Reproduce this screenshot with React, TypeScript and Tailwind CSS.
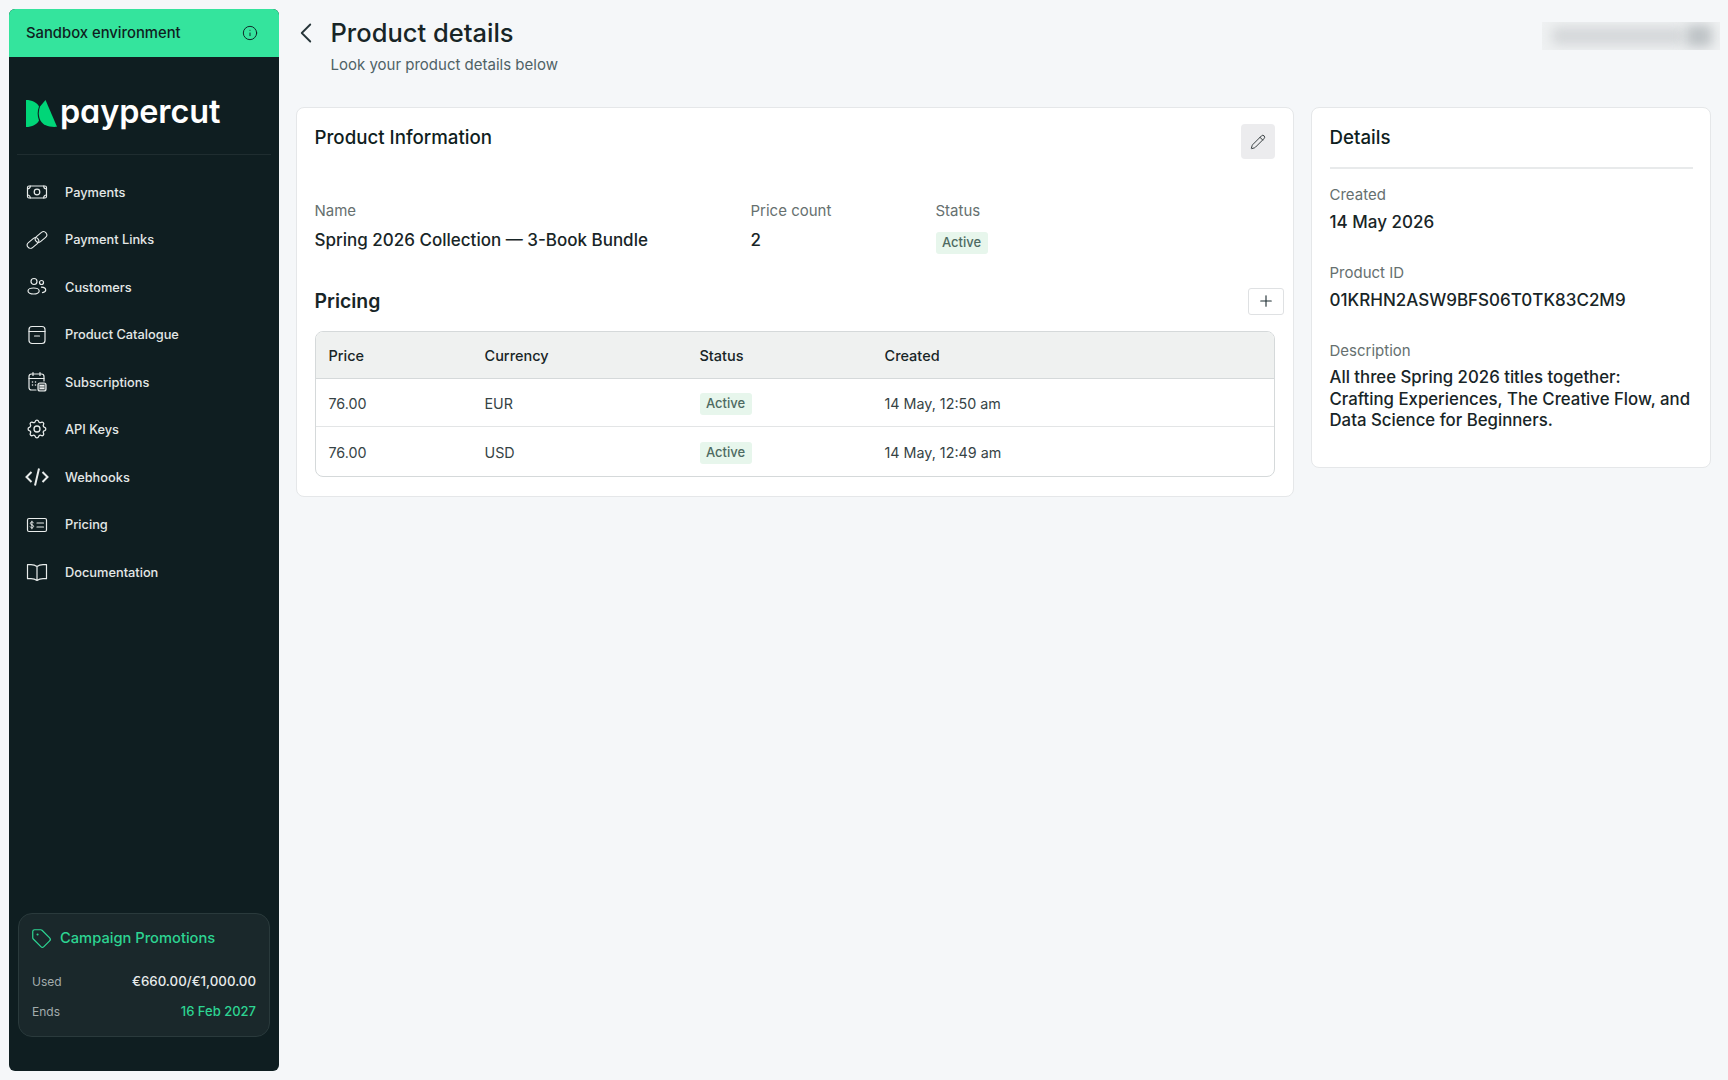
import { ChevronLeft, Info, Pencil, Plus, Tag } from "lucide-react";
import type { ReactNode } from "react";

const FONT = "font-['Inter','Liberation_Sans',sans-serif]";

// sidebar icons, drawn on a 24x24 box
function NavIcon({ name }: { name: string }) {
  const shared = {
    width: 24,
    height: 24,
    viewBox: "0 0 24 24",
    fill: "none",
    stroke: "currentColor",
    strokeWidth: 1.2,
    strokeLinecap: "round" as const,
    strokeLinejoin: "round" as const,
  };
  switch (name) {
    case "payments":
      return (
        <svg {...shared}>
          <rect x="2.5" y="6" width="19" height="12" rx="1.5" />
          <circle cx="12" cy="12" r="2.8" />
          <path d="M2.500 9c1.600 0 2.800-1.300 2.800-3M21.500 9c-1.600 0-2.800-1.300-2.800-3M2.500 15c1.600 0 2.800 1.300 2.800 3M21.500 15c-1.600 0-2.800 1.300-2.800 3" />
        </svg>
      );
    case "links":
      return (
        <svg {...shared} strokeWidth={1.1}>
          <rect x="1.500" y="11.800" width="13" height="6.400" rx="3.200" transform="rotate(-40 8 15)" />
          <rect x="9.500" y="5.800" width="13" height="6.400" rx="3.200" transform="rotate(-40 16 9)" />
        </svg>
      );
    case "customers":
      return (
        <svg {...shared}>
          <circle cx="9" cy="6.500" r="3" />
          <circle cx="16.500" cy="7.500" r="2" />
          <ellipse cx="8.600" cy="16" rx="5.600" ry="3" />
          <path d="M16.500 12.200c2.400.2 4.200 1.300 4.200 2.800 0 1.300-1.300 2.300-3.200 2.700" />
        </svg>
      );
    case "catalogue":
      return (
        <svg {...shared}>
          <rect x="4" y="3.500" width="16" height="17" rx="3" />
          <path d="M4 8.500h16M9.500 13h5" />
        </svg>
      );
    case "subscriptions":
      return (
        <svg {...shared}>
          <path d="M11 20H6.500A2.500 2.500 0 0 1 4 17.500v-11A2.500 2.500 0 0 1 6.500 4h10A2.500 2.500 0 0 1 19 6.500V11" />
          <path d="M4 8.500h15M8 2.500v3M15 2.500v3" />
          <path d="M7.500 12h.01M10.500 12h.01M7.500 15h.01M10.500 15h.01" strokeWidth="1.6" />
          <rect x="13" y="13" width="8" height="8" rx="2" fill="currentColor" fillOpacity=".35" />
          <path d="M15 15.500h4M15 17h4M15 18.500h4" strokeWidth="1" />
        </svg>
      );
    case "keys":
      return (
        <svg {...shared} strokeWidth={1.3}>
          <path d="M10.300 3.300c.4-1.600 2.900-1.600 3.300 0a1.700 1.700 0 0 0 2.600 1.100c1.500-.9 3.200.8 2.300 2.300a1.700 1.700 0 0 0 1.100 2.600c1.600.4 1.600 2.900 0 3.300a1.700 1.700 0 0 0-1.100 2.600c.9 1.500-.8 3.200-2.300 2.300a1.700 1.700 0 0 0-2.600 1.100c-.4 1.600-2.900 1.600-3.300 0a1.700 1.700 0 0 0-2.600-1.100c-1.500.9-3.200-.8-2.300-2.300a1.700 1.700 0 0 0-1.100-2.600c-1.600-.4-1.600-2.900 0-3.300a1.700 1.700 0 0 0 1.100-2.600c-.9-1.500.8-3.200 2.300-2.300a1.700 1.700 0 0 0 2.600-1.100Z" />
          <circle cx="12" cy="11" r="3" />
        </svg>
      );
    case "webhooks":
      return (
        <svg {...shared} strokeWidth={2} strokeLinecap="butt" strokeLinejoin="miter">
          <path d="M6.500 7 1.500 12l5 5M17.500 7l5 5-5 5M14 3.500l-4 17" />
        </svg>
      );
    case "pricing":
      return (
        <svg {...shared}>
          <rect x="2.500" y="5.500" width="19" height="13" rx="1.500" />
          <path d="M12 10h6.500M12 14h6.500" />
          <path d="M8.500 9.800c-.4-.6-1-.8-1.600-.8-.9 0-1.600.5-1.600 1.400 0 1.900 3.300 1 3.300 2.900 0 .9-.8 1.500-1.700 1.500-.7 0-1.300-.3-1.700-.9M6.900 8.200v7.600" strokeWidth="1" />
        </svg>
      );
    default:
      return (
        <svg {...shared}>
          <path d="M12 6.500c-1.600-1.200-3.600-1.800-6-1.800H2.500v14H6c2.400 0 4.400.6 6 1.800 1.600-1.200 3.600-1.800 6-1.800h3.500v-14H18c-2.400 0-4.400.6-6 1.800ZM12 6.500v14" />
        </svg>
      );
  }
}

const NAV = [
  { name: "payments", label: "Payments" },
  { name: "links", label: "Payment Links" },
  { name: "customers", label: "Customers" },
  { name: "catalogue", label: "Product Catalogue" },
  { name: "subscriptions", label: "Subscriptions" },
  { name: "keys", label: "API Keys" },
  { name: "webhooks", label: "Webhooks" },
  { name: "pricing", label: "Pricing" },
  { name: "docs", label: "Documentation" },
];

function Logo() {
  return (
    <div className="flex items-center gap-[3px]">
      <svg width="31" height="27" viewBox="0 0 31 27">
        <path d="M0 0c6 0 11 2.500 13 6.500-1.800 4.500-1.800 9.500 0 14-2 4-7 6.500-13 6.500Z" fill="#00d678" />
        <path d="M19.500 0 31 26.800c-8 .6-14-1.500-16.500-6.300-2.200-4.500-2.200-9.500-.4-14Z" fill="#00d678" />
      </svg>
      <span className="relative top-[-1px] text-[32.400px] leading-none font-semibold tracking-[-0.1px] text-white [font-feature-settings:'cv11']">
        paypercut
      </span>
    </div>
  );
}

function Sidebar() {
  return (
    <aside className="flex h-[1062px] w-[270px] shrink-0 flex-col overflow-hidden rounded-[6px] bg-[#0f1e21]">
      <div className="flex h-[48px] shrink-0 items-center justify-between bg-[#34e49d] pr-[21px] pl-[17px] text-[14.800px] font-[450] text-[#0f1e21]">
        <span>Sandbox environment</span>
        <Info size={16} strokeWidth={1.4} />
      </div>
      <div className="mx-[8px] flex h-[98px] shrink-0 items-center border-b border-[#1f2d30] pt-[15px] pl-[9px]">
        <Logo />
      </div>
      <nav className="mt-[13.500px] flex flex-col">
        {NAV.map((item) => (
          <div key={item.name} className="flex h-[47.500px] items-center text-[12.800px] font-[450] text-[#e4e8e7]">
            <span className="flex w-[56px] shrink-0 justify-center pr-[1px] text-[#e8eceb]">
              <NavIcon name={item.name} />
            </span>
            {item.label}
          </div>
        ))}
      </nav>
      <div className="mx-[9px] mt-auto mb-[34px] h-[124px] rounded-[14px] border border-[#2a3a3c] bg-[#1a282b] px-[13px] pt-[13px]">
        <div className="flex items-center gap-[8px] text-[14.700px] font-[450] text-[#2dd492]">
          <Tag size={21} strokeWidth={1.4} className="-ml-[1px]" />
          Campaign Promotions
        </div>
        <div className="mt-[25px] flex h-[16px] items-center justify-between text-[13.300px]">
          <span className="text-[12px] text-[#a3acad]">Used</span>
          <span className="font-[450] text-[#e8eceb]">€660.00/€1,000.00</span>
        </div>
        <div className="mt-[14px] flex h-[16px] items-center justify-between text-[13px]">
          <span className="text-[12px] text-[#a3acad]">Ends</span>
          <span className="font-[450] text-[#2dd492]">16 Feb 2027</span>
        </div>
      </div>
    </aside>
  );
}

function Badge() {
  return (
    <span className="inline-flex h-[22px] w-[52px] items-center justify-center rounded-[3px] bg-[#e7f6ec] text-[13px] font-[450] text-[#4e6a62]">
      Active
    </span>
  );
}

function Field({
  label,
  children,
  className,
  tight,
}: {
  label: string;
  children: ReactNode;
  className?: string;
  tight?: boolean;
}) {
  return (
    <div className={className}>
      <div className="text-[15px] leading-[20px] text-[#66706f]">{label}</div>
      <div className={`${tight ? "mt-[6px]" : "mt-[8px]"} text-[17px] leading-[22px] font-[450] text-[#182527]`}>{children}</div>
    </div>
  );
}

const ROWS = [
  { currency: "EUR", created: "14 May, 12:50 am" },
  { currency: "USD", created: "14 May, 12:49 am" },
];

function ProductCard() {
  return (
    <section className="h-[390px] flex-1 rounded-[8px] border border-[#e5e7e9] bg-white pt-[16px] pr-[18px] pl-[17.500px]">
      <div className="flex items-start justify-between">
        <h2 className="mt-[1px] text-[18.700px] leading-[26px] font-[450] text-[#0f1e21]">Product Information</h2>
        <button className="flex h-[35px] w-[34px] items-center justify-center rounded-[4px] bg-[#ececee] text-[#2b3335]">
          <Pencil size={16} strokeWidth={1.4} />
        </button>
      </div>
      <div className="mt-[42px] flex">
        <Field label="Name" className="w-[436px]">Spring 2026 Collection — 3-Book Bundle</Field>
        <Field label="Price count" className="w-[185px]">2</Field>
        <div>
          <div className="text-[15px] leading-[20px] text-[#66706f]">Status</div>
          <div className="mt-[8px]"><Badge /></div>
        </div>
      </div>
      <div className="mt-[33px] flex items-center justify-between">
        <h3 className="text-[19.400px] font-semibold text-[#182527]">Pricing</h3>
        <button className="-mr-[9px] flex h-[27px] w-[36px] items-center justify-center rounded-[3px] border border-[#dfe1e3] bg-white text-[#1f2e32]">
          <Plus size={18} strokeWidth={1.5} />
        </button>
      </div>
      <div className="mt-[15px] overflow-hidden rounded-[8px] border border-[#d5d9da]">
        <div className="flex h-[47px] items-center border-b border-[#d5d9da] bg-[#eff1f0] pt-[2px] text-[14.500px] font-[450] text-[#182527]">
          <span className="w-[169px] pl-[13px]">Price</span>
          <span className="w-[215px]">Currency</span>
          <span className="w-[185px]">Status</span>
          <span>Created</span>
        </div>
        {ROWS.map((r, i) => (
          <div
            key={r.currency}
            className={`flex h-[48.500px] items-center pt-[2px] text-[14.300px] text-[#364345] ${i === 0 ? "border-b border-[#e3e5e6]" : ""}`}
          >
            <span className="w-[169px] pl-[13px]">76.00</span>
            <span className="w-[215px]">{r.currency}</span>
            <span className="w-[185px]"><Badge /></span>
            <span>{r.created}</span>
          </div>
        ))}
      </div>
    </section>
  );
}

function DetailsCard() {
  return (
    <section className="h-[361px] w-[400px] shrink-0 rounded-[8px] border border-[#e5e7e9] bg-white pt-[16px] pr-[17px] pl-[17.500px]">
      <h2 className="mt-[1px] border-b-2 border-[#e8eaeb] pb-[16px] text-[18.700px] leading-[26px] font-[450] text-[#0f1e21]">Details</h2>
      <Field label="Created" className="mt-[16px]" tight>14 May 2026</Field>
      <Field label="Product ID" className="mt-[30px]" tight>01KRHN2ASW9BFS06T0TK83C2M9</Field>
      <div className="mt-[30px]">
        <div className="text-[15px] leading-[20px] text-[#66706f]">Description</div>
        <p className="mt-[6px] whitespace-nowrap text-[16.800px] leading-[21.500px] font-[450] text-[#182527]">
          All three Spring 2026 titles together:<br />
          Crafting Experiences, The Creative Flow, and<br />
          Data Science for Beginners.
        </p>
      </div>
    </section>
  );
}

export default function App() {
  return (
    <div className={`${FONT} flex h-[1080px] w-[1728px] gap-[17px] overflow-hidden bg-[#f5f7f9] pt-[9px] pl-[9px]`}>
      <Sidebar />
      <main className="min-w-0 flex-1 pr-[17px]">
        <header className="flex h-[98px] items-start justify-between">
          <div className="flex items-start">
            <ChevronLeft size={34} strokeWidth={1.3} className="mt-[7px] -ml-[7px] text-[#27363a]" />
            <div className="ml-[7.500px]">
              <h1 className="mt-[7px] text-[25.500px] leading-[34px] font-[450] text-[#182527]">Product details</h1>
              <p className="mt-[5px] text-[15px] leading-[20px] text-[#4f6266]">Look your product details below</p>
            </div>
          </div>
          <div className="relative -mr-[9px] mt-[13px] h-[28px] w-[178px] overflow-hidden bg-[#eff1f2]">
            <div className="absolute top-[5px] left-[10px] h-[18px] w-[132px] rounded bg-[#d4d7d9] blur-[6px]" />
            <div className="absolute top-[3px] right-[8px] h-[22px] w-[26px] rounded bg-[#bdc2c5] blur-[6px]" />
          </div>
        </header>
        <div className="flex items-start gap-[17px]">
          <ProductCard />
          <DetailsCard />
        </div>
      </main>
    </div>
  );
}
